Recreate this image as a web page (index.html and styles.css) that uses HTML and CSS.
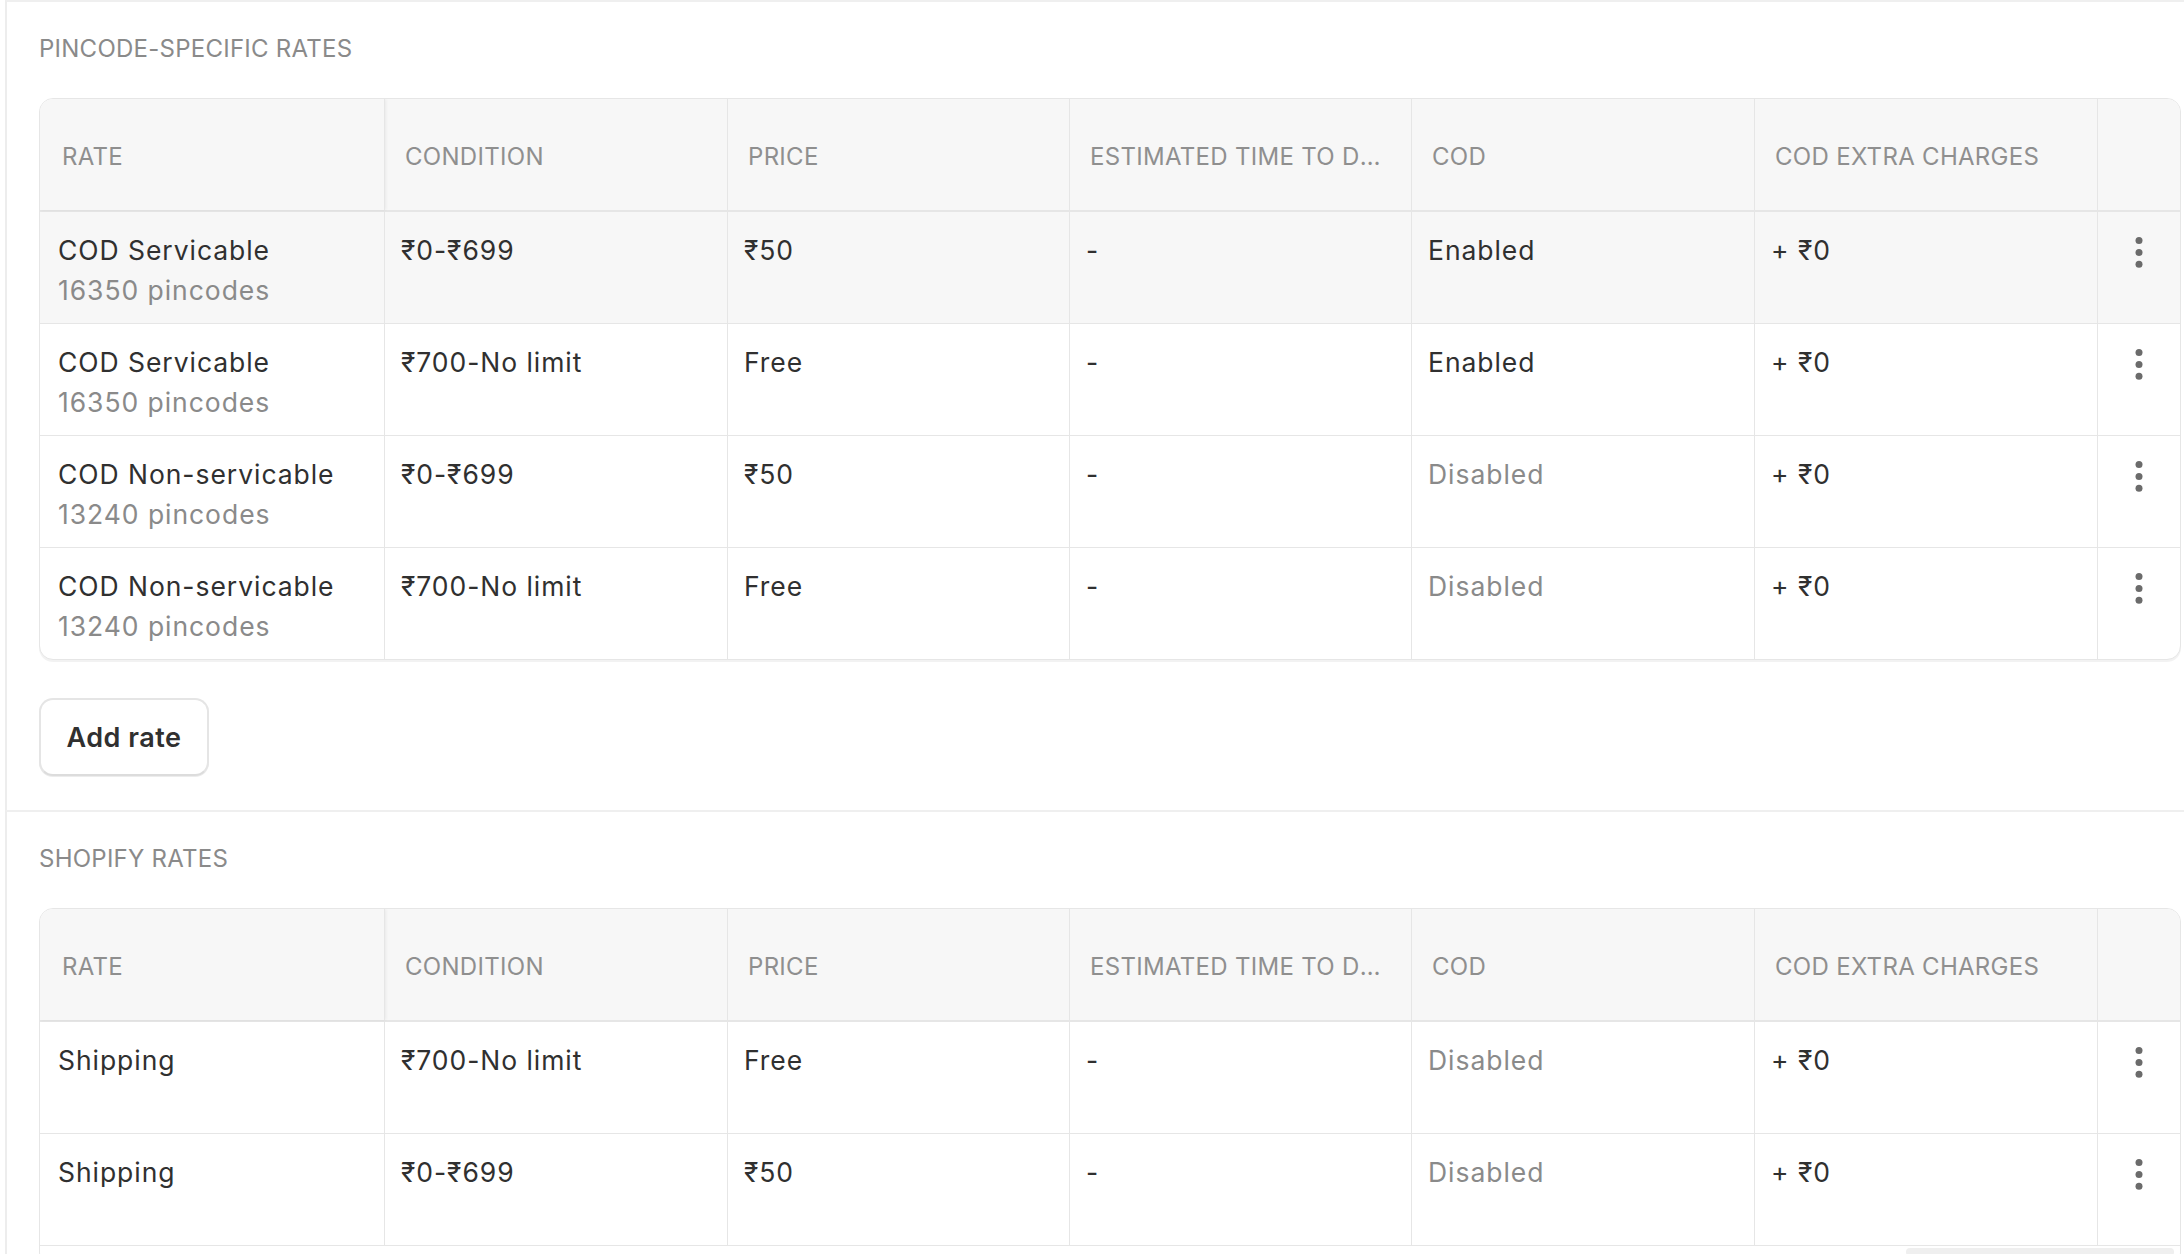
FILE: index.html
```html
<!DOCTYPE html>
<html lang="en">
<head>
<meta charset="utf-8">
<title>Rates</title>
<link rel="stylesheet" href="styles.css">
</head>
<body>
<section class="panel">
  <h2 class="panel-title">PINCODE-SPECIFIC RATES</h2>
  <div class="table-wrap">
    <div class="row head">
      <div class="cell first">RATE</div>
      <div class="cell">CONDITION</div>
      <div class="cell">PRICE</div>
      <div class="cell">ESTIMATED TIME TO DELIVERY</div>
      <div class="cell">COD</div>
      <div class="cell">COD EXTRA CHARGES</div>
      <div class="cell act"></div>
    </div>
    <div class="row hover">
      <div class="cell first"><div>COD Servicable</div><div class="muted">16350 pincodes</div></div>
      <div class="cell">₹0-₹699</div>
      <div class="cell">₹50</div>
      <div class="cell">-</div>
      <div class="cell">Enabled</div>
      <div class="cell">+ ₹0</div>
      <div class="cell act"><svg class="dots" viewBox="0 0 8 31" width="8" height="31"><circle cx="4" cy="3.6" r="3.5"/><circle cx="4" cy="15.4" r="3.5"/><circle cx="4" cy="27.2" r="3.5"/></svg></div>
    </div>
    <div class="row">
      <div class="cell first"><div>COD Servicable</div><div class="muted">16350 pincodes</div></div>
      <div class="cell">₹700-No limit</div>
      <div class="cell">Free</div>
      <div class="cell">-</div>
      <div class="cell">Enabled</div>
      <div class="cell">+ ₹0</div>
      <div class="cell act"><svg class="dots" viewBox="0 0 8 31" width="8" height="31"><circle cx="4" cy="3.6" r="3.5"/><circle cx="4" cy="15.4" r="3.5"/><circle cx="4" cy="27.2" r="3.5"/></svg></div>
    </div>
    <div class="row">
      <div class="cell first"><div>COD Non-servicable</div><div class="muted">13240 pincodes</div></div>
      <div class="cell">₹0-₹699</div>
      <div class="cell">₹50</div>
      <div class="cell">-</div>
      <div class="cell muted">Disabled</div>
      <div class="cell">+ ₹0</div>
      <div class="cell act"><svg class="dots" viewBox="0 0 8 31" width="8" height="31"><circle cx="4" cy="3.6" r="3.5"/><circle cx="4" cy="15.4" r="3.5"/><circle cx="4" cy="27.2" r="3.5"/></svg></div>
    </div>
    <div class="row last">
      <div class="cell first"><div>COD Non-servicable</div><div class="muted">13240 pincodes</div></div>
      <div class="cell">₹700-No limit</div>
      <div class="cell">Free</div>
      <div class="cell">-</div>
      <div class="cell muted">Disabled</div>
      <div class="cell">+ ₹0</div>
      <div class="cell act"><svg class="dots" viewBox="0 0 8 31" width="8" height="31"><circle cx="4" cy="3.6" r="3.5"/><circle cx="4" cy="15.4" r="3.5"/><circle cx="4" cy="27.2" r="3.5"/></svg></div>
    </div>
  </div>
  <button class="btn" type="button">Add rate</button>
</section>

<section class="panel">
  <h2 class="panel-title">SHOPIFY RATES</h2>
  <div class="table-wrap">
    <div class="row head">
      <div class="cell first">RATE</div>
      <div class="cell">CONDITION</div>
      <div class="cell">PRICE</div>
      <div class="cell">ESTIMATED TIME TO DELIVERY</div>
      <div class="cell">COD</div>
      <div class="cell">COD EXTRA CHARGES</div>
      <div class="cell act"></div>
    </div>
    <div class="row">
      <div class="cell first">Shipping</div>
      <div class="cell">₹700-No limit</div>
      <div class="cell">Free</div>
      <div class="cell">-</div>
      <div class="cell muted">Disabled</div>
      <div class="cell">+ ₹0</div>
      <div class="cell act"><svg class="dots" viewBox="0 0 8 31" width="8" height="31"><circle cx="4" cy="3.6" r="3.5"/><circle cx="4" cy="15.4" r="3.5"/><circle cx="4" cy="27.2" r="3.5"/></svg></div>
    </div>
    <div class="row">
      <div class="cell first">Shipping</div>
      <div class="cell">₹0-₹699</div>
      <div class="cell">₹50</div>
      <div class="cell">-</div>
      <div class="cell muted">Disabled</div>
      <div class="cell">+ ₹0</div>
      <div class="cell act"><svg class="dots" viewBox="0 0 8 31" width="8" height="31"><circle cx="4" cy="3.6" r="3.5"/><circle cx="4" cy="15.4" r="3.5"/><circle cx="4" cy="27.2" r="3.5"/></svg></div>
    </div>
    <div class="table-foot"><div class="thumb"></div></div>
  </div>
</section>
</body>
</html>
```
FILE: styles.css
```css
* { box-sizing: border-box; }
html, body { margin: 0; padding: 0; background: #ffffff; }
body {
  width: 2184px;
  height: 1254px;
  overflow: hidden;
  font-family: Inter, "Noto Sans", "Liberation Sans", sans-serif;
  color: #303030;
}
.panel {
  margin-left: 5px;
  border-left: 2px solid #ededed;
  border-top: 2px solid #efefef;
  padding: 31px 3px 34px 32px;
}
.panel-title {
  margin: 0;
  font-size: 24px;
  line-height: 32px;
  font-weight: 400;
  letter-spacing: 0.25px;
  color: #8a8a8a;
}
.table-wrap {
  margin-top: 33px;
  border: 1px solid #e6e6e6;
  border-radius: 14px;
  overflow: hidden;
  box-shadow: 0 2px 0 rgba(0, 0, 0, 0.05);
  background: #fff;
}
.row {
  display: grid;
  grid-template-columns: 345px 343px 342px 342px 343px 343px 1fr;
  height: 112px;
  border-bottom: 1px solid #e6e6e6;
}
.row.last { height: 111px; border-bottom: 0; }
.row.hover { background: #f7f7f7; }
.row.head {
  height: 113px;
  background: #f7f7f7;
  border-bottom: 2px solid #e6e6e6;
}
.cell {
  border-right: 1px solid #e6e6e6;
  padding: 18px 16px 0 16px;
  font-size: 26.5px;
  line-height: 40px;
  letter-spacing: 0.95px;
  white-space: nowrap;
  overflow: hidden;
  text-overflow: ellipsis;
}
.cell.first { padding-left: 18px; }
.cell.act { border-right: 0; padding: 25px 0 0 0; display: flex; justify-content: center; align-items: flex-start; }
.head .cell {
  padding: 42px 22px 0 20px;
  font-size: 24px;
  line-height: 32px;
  letter-spacing: 0.3px;
  color: #8f8f8f;
}
.head .cell.first {
  padding-left: 22px;
  box-shadow: 1px 0 3px rgba(0, 0, 0, 0.06);
}
.head .cell.act { padding: 0; }
.muted { color: #8a8a8a; }
.dots { fill: #6b6b6b; display: block; }
.btn {
  display: block;
  margin-top: 38px;
  width: 170px;
  height: 78px;
  padding: 0;
  border: 2px solid #e5e5e5;
  border-bottom-color: #dcdcdc;
  border-radius: 14px;
  background: #ffffff;
  box-shadow: 0 1px 0 #ececec;
  font-family: Inter, "Noto Sans", "Liberation Sans", sans-serif;
  font-size: 27px;
  font-weight: 600;
  letter-spacing: 0.5px;
  color: #303030;
}
.table-foot {
  height: 20px;
  display: flex;
  justify-content: flex-end;
  padding: 2px 6px 0 0;
}
.thumb {
  width: 268px;
  height: 8px;
  border-radius: 4px;
  background: #efefef;
}
```
